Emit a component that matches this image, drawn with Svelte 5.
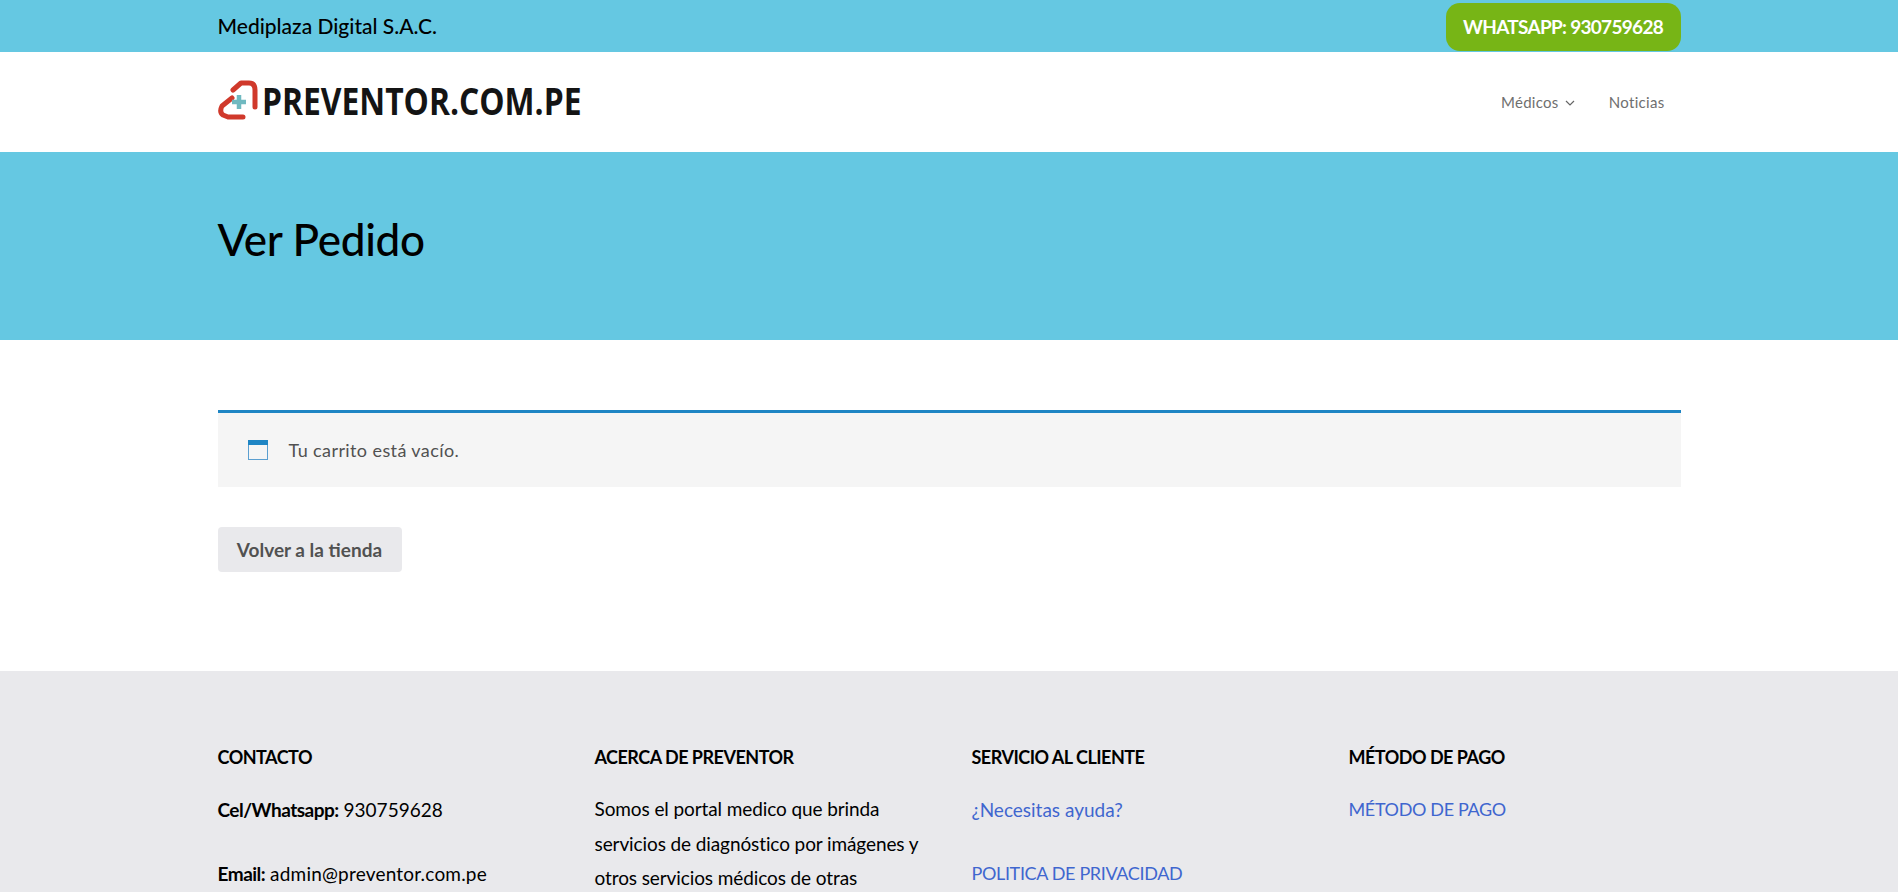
<script>
  const menu = ['Noticias'];
</script>

<div class="topbar">
  <div class="wrap topbar-row">
    <span class="company">Mediplaza Digital S.A.C.</span>
    <span class="whatsapp">WHATSAPP: 930759628</span>
  </div>
</div>

<header class="header">
  <div class="wrap header-row">
    <div class="logo">
      <svg width="42" height="40" viewBox="0 0 42 40">
        <path d="M15 10 L23 3 H31 Q37 3 37 10 V27" fill="none" stroke="#d0392b" stroke-width="5" stroke-linecap="round" stroke-linejoin="round"/>
        <path d="M14 18 L4 26 Q1 32 5 35 L10 37 H25" fill="none" stroke="#d0392b" stroke-width="5" stroke-linecap="round" stroke-linejoin="round"/>
        <path d="M21 15 V29 M14 22 H28" stroke="#6fb9c0" stroke-width="4.5"/>
      </svg>
      <span class="logo-text">PREVENTOR.COM.PE</span>
    </div>
    <nav class="nav">
      <span class="nav-item">Médicos
        <svg width="10" height="6" viewBox="0 0 10 6"><path d="M1 1l4 4 4-4" fill="none" stroke="#666" stroke-width="1.2"/></svg>
      </span>
      {#each menu as item}
        <span class="nav-item">{item}</span>
      {/each}
    </nav>
  </div>
</header>

<section class="title-band">
  <div class="wrap"><h1>Ver Pedido</h1></div>
</section>

<main class="wrap main">
  <div class="notice">
    <svg width="20" height="20" viewBox="0 0 20 20">
      <rect x="0.5" y="0.5" width="19" height="19" fill="#f5f5f5" stroke="#5b9fd0"/>
      <rect x="0" y="0" width="20" height="5" fill="#1e85c4"/>
    </svg>
    <span>Tu carrito está vacío.</span>
  </div>
  <button class="back">Volver a la tienda</button>
</main>

<footer class="footer">
  <div class="wrap cols">
    <div>
      <h4>CONTACTO</h4>
      <p><b>Cel/Whatsapp:</b> 930759628</p>
      <p><b>Email:</b> <span class="mail">admin@preventor.com.pe</span></p>
    </div>
    <div>
      <h4>ACERCA DE PREVENTOR</h4>
      <p class="about">Somos el portal medico que brinda servicios de diagnóstico por imágenes y otros servicios médicos de otras</p>
    </div>
    <div>
      <h4>SERVICIO AL CLIENTE</h4>
      <p class="link">¿Necesitas ayuda?</p>
      <p class="link caps">POLITICA DE PRIVACIDAD</p>
    </div>
    <div>
      <h4>MÉTODO DE PAGO</h4>
      <p class="link caps">MÉTODO DE PAGO</p>
    </div>
  </div>
</footer>

<style>
  :global(body) {
    margin: 0;
    height: 892px;
    overflow: hidden;
    font-family: Lato, "Open Sans", sans-serif;
    color: #000;
    background: #fff;
  }

  .wrap {
    width: 1463px;
    margin: 0 auto;
  }

  .topbar {
    background: #65c8e2;
    height: 52px;
  }

  .topbar-row {
    display: flex;
    justify-content: space-between;
    align-items: flex-start;
  }

  .company {
    font-size: 21px;
    font-weight: 500;
    line-height: 52px;
  }

  .whatsapp {
    margin-top: 3px;
    height: 48px;
    width: 235px;
    background: #77b516;
    border-radius: 14px;
    color: #fff;
    font-size: 19px;
    font-weight: 700;
    letter-spacing: -0.7px;
    line-height: 48px;
    text-align: center;
  }

  .header-row {
    height: 100px;
    display: flex;
    justify-content: space-between;
    align-items: center;
  }

  .logo {
    display: flex;
    align-items: center;
    gap: 2px;
    height: 40px;
    margin-top: -4px;
  }

  .logo-text {
    font-family: "Open Sans", sans-serif;
    font-weight: 700;
    font-size: 37px;
    color: #141414;
    display: inline-block;
    transform: scaleX(0.86);
    transform-origin: left center;
  }

  .nav {
    display: flex;
    gap: 34px;
    padding-right: 16px;
  }

  .nav-item {
    font-size: 15px;
    color: #6f6f6f;
    letter-spacing: 0.3px;
  }

  .nav-item svg {
    margin: 0 0 2px 2px;
  }

  .title-band {
    background: #65c8e2;
    height: 188px;
  }

  h1 {
    margin: 0;
    padding-top: 59px;
    font-size: 44px;
    font-weight: 500;
    letter-spacing: -0.3px;
    line-height: 56px;
  }

  .main {
    padding-top: 70px;
    height: 261px;
  }

  .notice {
    border-top: 3px solid #1e85c4;
    background: #f5f5f5;
    height: 74px;
    display: flex;
    align-items: center;
    gap: 21px;
    padding-left: 30px;
    font-size: 18px;
    color: #515151;
    letter-spacing: 0.4px;
  }

  .back {
    display: block;
    margin-top: 40px;
    width: 184px;
    height: 45px;
    border: none;
    border-radius: 4px;
    background: #e9e9ec;
    color: #515151;
    font-family: inherit;
    font-size: 19px;
    font-weight: 700;
  }

  .footer {
    background: #e9e9ec;
    height: 149px;
    padding-top: 72px;
    overflow: hidden;
  }

  .cols {
    display: grid;
    grid-template-columns: repeat(4, 377px);
  }

  h4 {
    margin: 0 0 21px;
    font-size: 18px;
    font-weight: 700;
    letter-spacing: -0.5px;
    line-height: 28px;
  }

  p {
    margin: 0 0 29px;
    font-size: 19px;
    line-height: 35px;
  }

  p b {
    letter-spacing: -0.5px;
  }

  .mail {
    letter-spacing: 0.2px;
  }

  .about {
    width: 340px;
    margin-top: 2px;
    letter-spacing: -0.1px;
    line-height: 34.5px;
  }

  .link {
    color: #3f66cf;
  }

  .caps {
    font-size: 18px;
    letter-spacing: -0.35px;
  }
</style>
